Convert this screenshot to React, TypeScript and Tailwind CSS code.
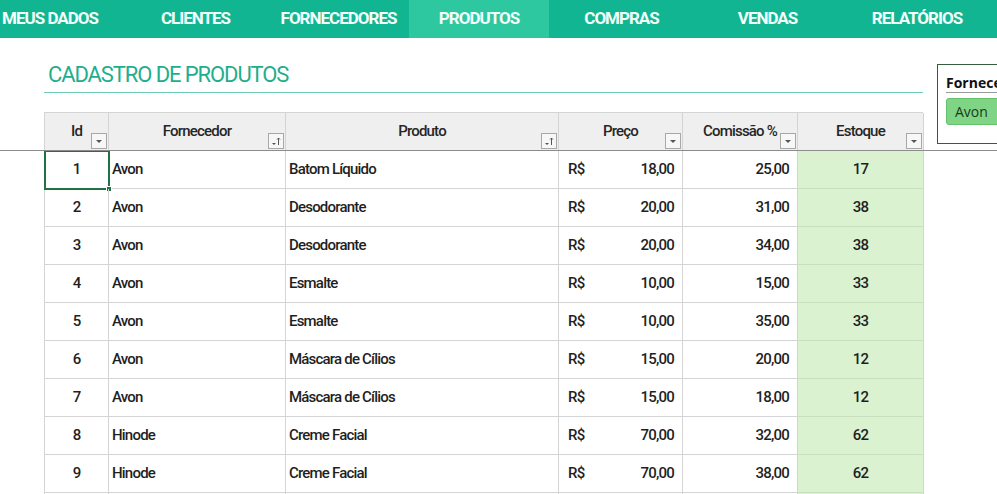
import type { ReactNode } from "react";

const tabs = [
  { label: "MEUS DADOS", w: "w-[146px]" },
  { label: "CLIENTES", w: "w-[145px]" },
  { label: "FORNECEDORES", w: "w-[141px]" },
  { label: "PRODUTOS", w: "w-[140px]", active: true },
  { label: "COMPRAS", w: "w-[145px]" },
  { label: "VENDAS", w: "w-[147px]" },
  { label: "RELATÓRIOS", w: "w-[152px]" },
];

const rows = [
  [1, "Avon", "Batom Líquido", "18,00", "25,00", 17],
  [2, "Avon", "Desodorante", "20,00", "31,00", 38],
  [3, "Avon", "Desodorante", "20,00", "34,00", 38],
  [4, "Avon", "Esmalte", "10,00", "15,00", 33],
  [5, "Avon", "Esmalte", "10,00", "35,00", 33],
  [6, "Avon", "Máscara de Cílios", "15,00", "20,00", 12],
  [7, "Avon", "Máscara de Cílios", "15,00", "18,00", 12],
  [8, "Hinode", "Creme Facial", "70,00", "32,00", 62],
  [9, "Hinode", "Creme Facial", "70,00", "38,00", 62],
];

const cols = "grid grid-cols-[64px_177px_273px_124px_115px_126px]";

function FilterButton({ sorted }: { sorted?: boolean }) {
  return (
    <span className="absolute right-[1px] bottom-[2px] w-[16px] h-[16px] border border-[#a8a8a8] bg-[#f7f7f7]">
      <svg width="14" height="14" viewBox="0 0 14 14" className="block">
        {sorted ? (
          <>
            <path d="M3 9 L7 9 L5 11 Z" fill="#555" />
            <path d="M9.5 11 L9.5 4 M8 5.5 L9.5 4 L11 5.5" stroke="#555" strokeWidth="1" fill="none" />
          </>
        ) : (
          <path d="M4 6 L10 6 L7 9 Z" fill="#555" />
        )}
      </svg>
    </span>
  );
}

function HeadCell({ children, sorted }: { children: ReactNode; sorted?: boolean }) {
  return (
    <div className="relative h-[38px] flex items-center justify-center border-r border-[#d4d4d4] bg-[#efefef] text-[15px] font-medium tracking-[-0.8px] text-[#262626]">
      <span className="-mt-[2px]">{children}</span>
      <FilterButton sorted={sorted} />
    </div>
  );
}

export default function App() {
  return (
    <div
      className="relative w-[997px] h-[494px] overflow-hidden bg-white"
      style={{ fontFamily: 'Roboto, "Liberation Sans", sans-serif' }}
    >
      <nav className="h-[38px] bg-[#12b592] flex -ml-[23px]">
        {tabs.map((t) => (
          <div
            key={t.label}
            className={`${t.w} shrink-0 flex items-center justify-center text-[17px] font-bold tracking-[-1px] text-[#f2fffa] ${
              t.active ? "bg-[#2dc8a0]" : ""
            }`}
          >
            {t.label}
          </div>
        ))}
      </nav>

      <div className="pl-[44px] pt-[22px] w-[923px]">
        <h1 className="pl-[4px] text-[22px] leading-[30px] text-[#1fae8d] tracking-[-1.1px]">
          CADASTRO DE PRODUTOS
        </h1>
        <div className="mt-[2px] h-px bg-[#6fcfb6]" />

        <div className="mt-[19px] border-l border-[#d4d4d4]">
          <div className={`${cols} border-t border-[#d4d4d4]`}>
            <HeadCell>Id</HeadCell>
            <HeadCell sorted>Fornecedor</HeadCell>
            <HeadCell sorted>Produto</HeadCell>
            <HeadCell>Preço</HeadCell>
            <HeadCell>Comissão %</HeadCell>
            <HeadCell>Estoque</HeadCell>
          </div>
          {rows.map((r, i) => (
            <div key={i} className={`${cols} text-[15px] font-medium tracking-[-0.8px] text-[#1f1f1f]`}>
              <div className="relative h-[38px] flex items-center justify-center border-r border-b border-[#d4d4d4]">
                {r[0]}
                {i === 0 && (
                  <span className="absolute -left-px -top-px w-[66px] h-[40px] border-2 border-[#217346]">
                    <span className="absolute -right-[4px] -bottom-[4px] w-[6px] h-[6px] bg-[#217346] border border-white" />
                  </span>
                )}
              </div>
              <div className="h-[38px] flex items-center pl-[3px] border-r border-b border-[#d4d4d4]">{r[1]}</div>
              <div className="h-[38px] flex items-center pl-[3px] border-r border-b border-[#d4d4d4]">{r[2]}</div>
              <div className="h-[38px] flex items-center justify-between pl-[9px] pr-[8px] border-r border-b border-[#d4d4d4]">
                <span>R$</span>
                <span>{r[3]}</span>
              </div>
              <div className="h-[38px] flex items-center justify-end pr-[8px] border-r border-b border-[#d4d4d4]">{r[4]}</div>
              <div className="h-[38px] flex items-center justify-center bg-[#daf2d0] border-r border-b border-[#c9e0c0]">{r[5]}</div>
            </div>
          ))}
          <div className={`${cols} h-[4px]`}>
            <div className="border-r border-[#d4d4d4]" />
            <div className="border-r border-[#d4d4d4]" />
            <div className="border-r border-[#d4d4d4]" />
            <div className="border-r border-[#d4d4d4]" />
            <div className="border-r border-[#d4d4d4]" />
            <div className="bg-[#daf2d0] border-r border-[#c9e0c0]" />
          </div>
        </div>
      </div>

      {/* frozen panes line */}
      <div className="absolute left-0 top-[150px] w-full h-px bg-[#8c8c8c]" />

      {/* slicer */}
      <div className="absolute left-[937px] top-[64px] w-[90px] h-[80px] border border-[#355e3f] bg-white">
        <div className="mx-[8px] pt-[7px] h-[28px] border-b border-[#9a9a9a] text-[14px] font-bold text-[#111]" style={{ fontFamily: '"Open Sans", sans-serif' }}>
          Fornecedor
        </div>
        <div
          className="ml-[8px] mt-[5px] h-[27px] rounded-[3px] border border-[#63c06b] bg-[#7fd585] flex items-center pl-[8px] text-[14px] text-[#1a3a1a]"
          style={{ fontFamily: '"Open Sans", sans-serif' }}
        >
          Avon
        </div>
      </div>
    </div>
  );
}
